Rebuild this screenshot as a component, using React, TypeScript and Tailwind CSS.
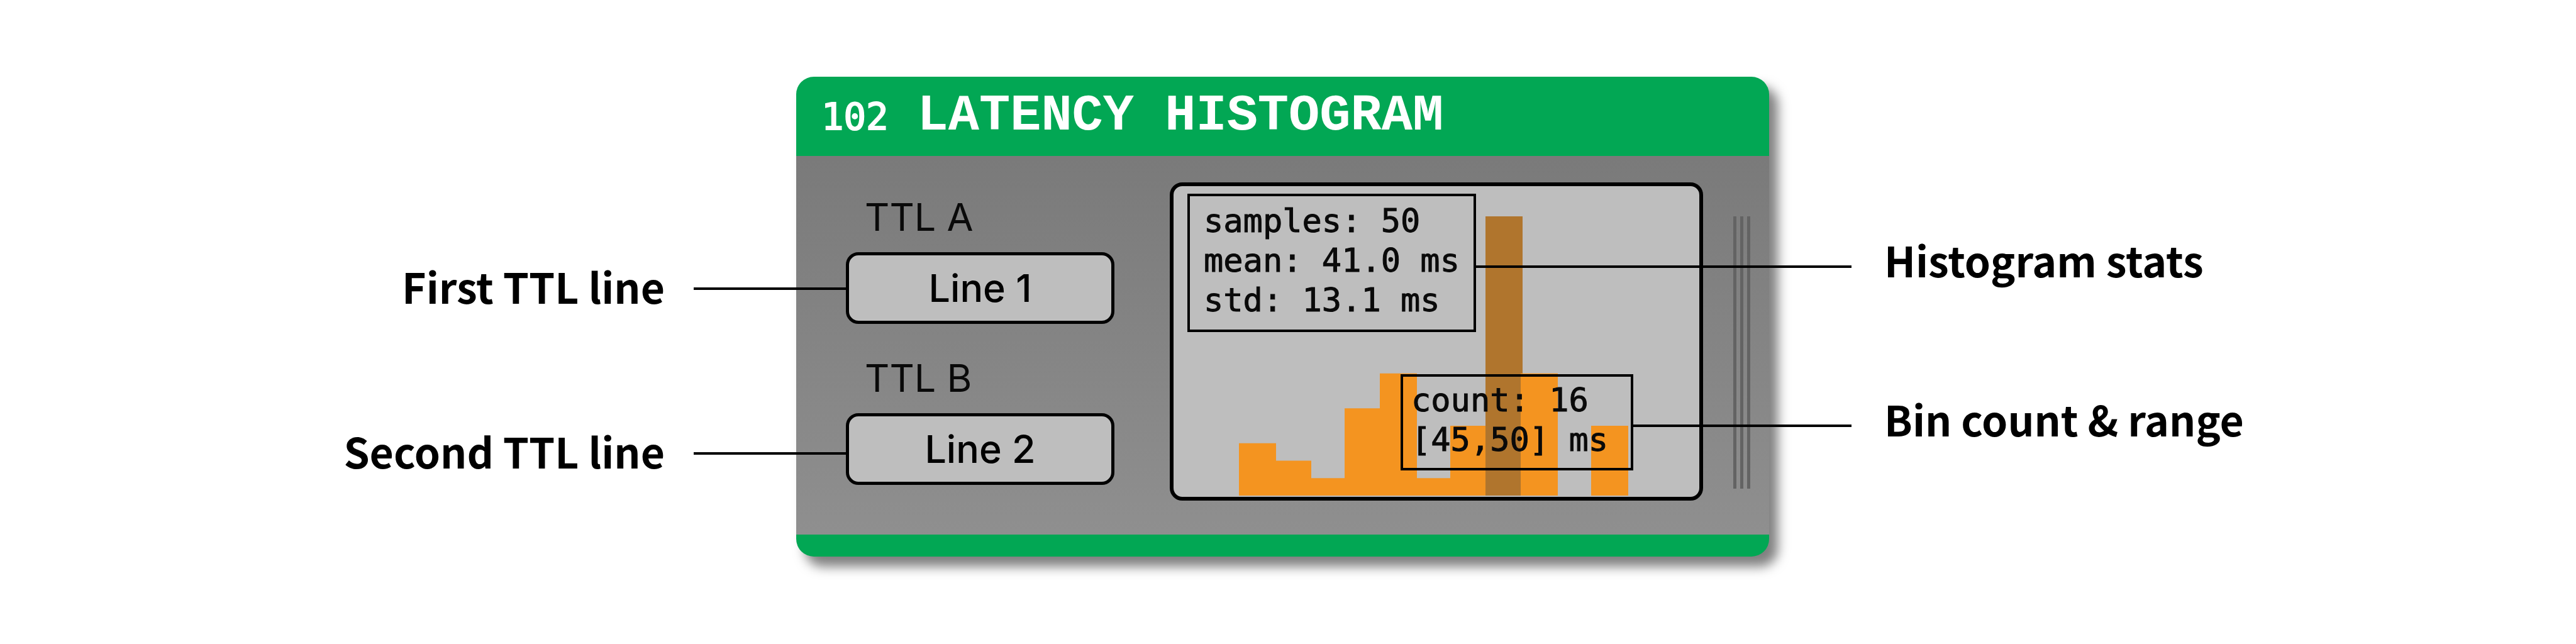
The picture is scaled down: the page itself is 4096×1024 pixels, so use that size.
import React from "react";

const counts = [3, 2, 1, 5, 7, 1, 4, 16, 7, 0, 4];
const hoveredBin = 7;
const BIN_PITCH = 56;
const BAR_WIDTH = 59;
const CHART_HEIGHT = 444;

function Histogram() {
  const unit = CHART_HEIGHT / 16;
  return (
    <svg
      className="h-[444px] w-[622px]"
      viewBox="0 0 622 444"
      role="img"
      aria-label="Latency histogram"
    >
      {counts.map((count, i) => (
        <rect
          key={i}
          x={i * BIN_PITCH}
          y={CHART_HEIGHT - count * unit}
          width={BAR_WIDTH}
          height={count * unit}
          fill={i === hoveredBin ? "#b0752d" : "#f49420"}
        />
      ))}
    </svg>
  );
}

function LineSelector({ id, label, value }: { id: string; label: string; value: string }) {
  return (
    <div className="flex flex-col gap-5">
      <span id={id} className="pl-[30px] text-[61px] leading-[72px] text-[#0a0a0a]">
        {label}
      </span>
      <button
        type="button"
        aria-labelledby={id}
        className="h-[114px] w-[427px] rounded-[20px] border-[5px] border-black bg-[#bebebe] text-[61px] leading-[72px] font-medium text-black"
      >
        {value}
      </button>
    </div>
  );
}

function LeftCallout({ text }: { text: string }) {
  return (
    <div className="-mr-[79px] flex h-[110px] items-center justify-end gap-[46px]">
      <span className="pb-2.5">{text}</span>
      <div className="h-1 w-[242px] bg-black" />
    </div>
  );
}

export default function App() {
  return (
    <main className="grid min-h-screen w-full grid-cols-[1fr_1547px_1fr] items-start bg-white pr-[17px] font-['Inter',sans-serif]">
      <aside className="relative z-10 flex flex-col gap-[152px] pt-[404px] font-['Noto_Sans_CJK_JP',sans-serif] text-[66px] leading-[100px] font-semibold whitespace-nowrap text-black">
        <LeftCallout text="First TTL line" />
        <LeftCallout text="Second TTL line" />
      </aside>

      <section className="mt-[122px] flex flex-col overflow-hidden rounded-[28px] bg-[#02a754] shadow-[14px_16px_18px_rgba(0,0,0,0.5)]">
        <header className="flex h-[126px] items-baseline gap-[46px] pt-[15px] pl-10 whitespace-nowrap text-white">
          <span className="font-['DejaVu_Sans_Mono',monospace] text-[59px] leading-[96px] [-webkit-text-stroke:2px_white]">
            102
          </span>
          <h1 className="font-['Liberation_Mono',monospace] text-[82px] leading-[96px] font-bold">
            LATENCY HISTOGRAM
          </h1>
        </header>

        <div className="flex h-[602px] items-start bg-linear-to-b from-[#7a7a7a] to-[#8f8f8f] pl-[79px]">
          <div className="flex flex-col gap-[50px] pt-[61px]">
            <LineSelector id="ttl-a" label="TTL A" value="Line 1" />
            <LineSelector id="ttl-b" label="TTL B" value="Line 2" />
          </div>

          <div className="relative mt-[42px] ml-[88px] flex h-[506px] w-[848px] items-end rounded-[20px] border-[6px] border-black bg-[#bebebe] pb-0.5 pl-[104px] font-['DejaVu_Sans_Mono',monospace] text-[52px] leading-[63px] whitespace-pre text-[#0a0a0a] [-webkit-text-stroke:1px_#0a0a0a]">
            <Histogram />
            <div className="absolute top-3 left-[22px] h-[220px] w-[459px] border-4 border-black pt-2 pl-[22px]">
              <p>samples: 50</p>
              <p>mean: 41.0 ms</p>
              <p>std: 13.1 ms</p>
            </div>
            <div className="absolute top-[299px] left-[361px] h-[153px] w-[370px] border-4 border-black pt-1.5 pl-[13px]">
              <p>count: 16</p>
              <p>[45,50] ms</p>
            </div>
          </div>

          <div className="mt-24 ml-12 flex h-[433px] gap-1.5">
            <div className="w-[5px] bg-[#636363]" />
            <div className="w-[5px] bg-[#636363]" />
            <div className="w-[5px] bg-[#636363]" />
          </div>
        </div>
        <div className="h-[35px]" />
      </section>

      <aside className="relative z-10 flex flex-col gap-[143px] pt-[369px] font-['Noto_Sans_CJK_JP',sans-serif] text-[66px] leading-[100px] font-semibold whitespace-nowrap text-black">
        <div className="-ml-[467px] flex h-[110px] items-center gap-[52px]">
          <div className="h-1 w-[598px] bg-black" />
          <span className="pb-6">Histogram stats</span>
        </div>
        <div className="-ml-[216px] flex h-[110px] items-center gap-[52px]">
          <div className="h-1 w-[347px] bg-black" />
          <span className="pb-6">Bin count &amp; range</span>
        </div>
      </aside>
    </main>
  );
}
